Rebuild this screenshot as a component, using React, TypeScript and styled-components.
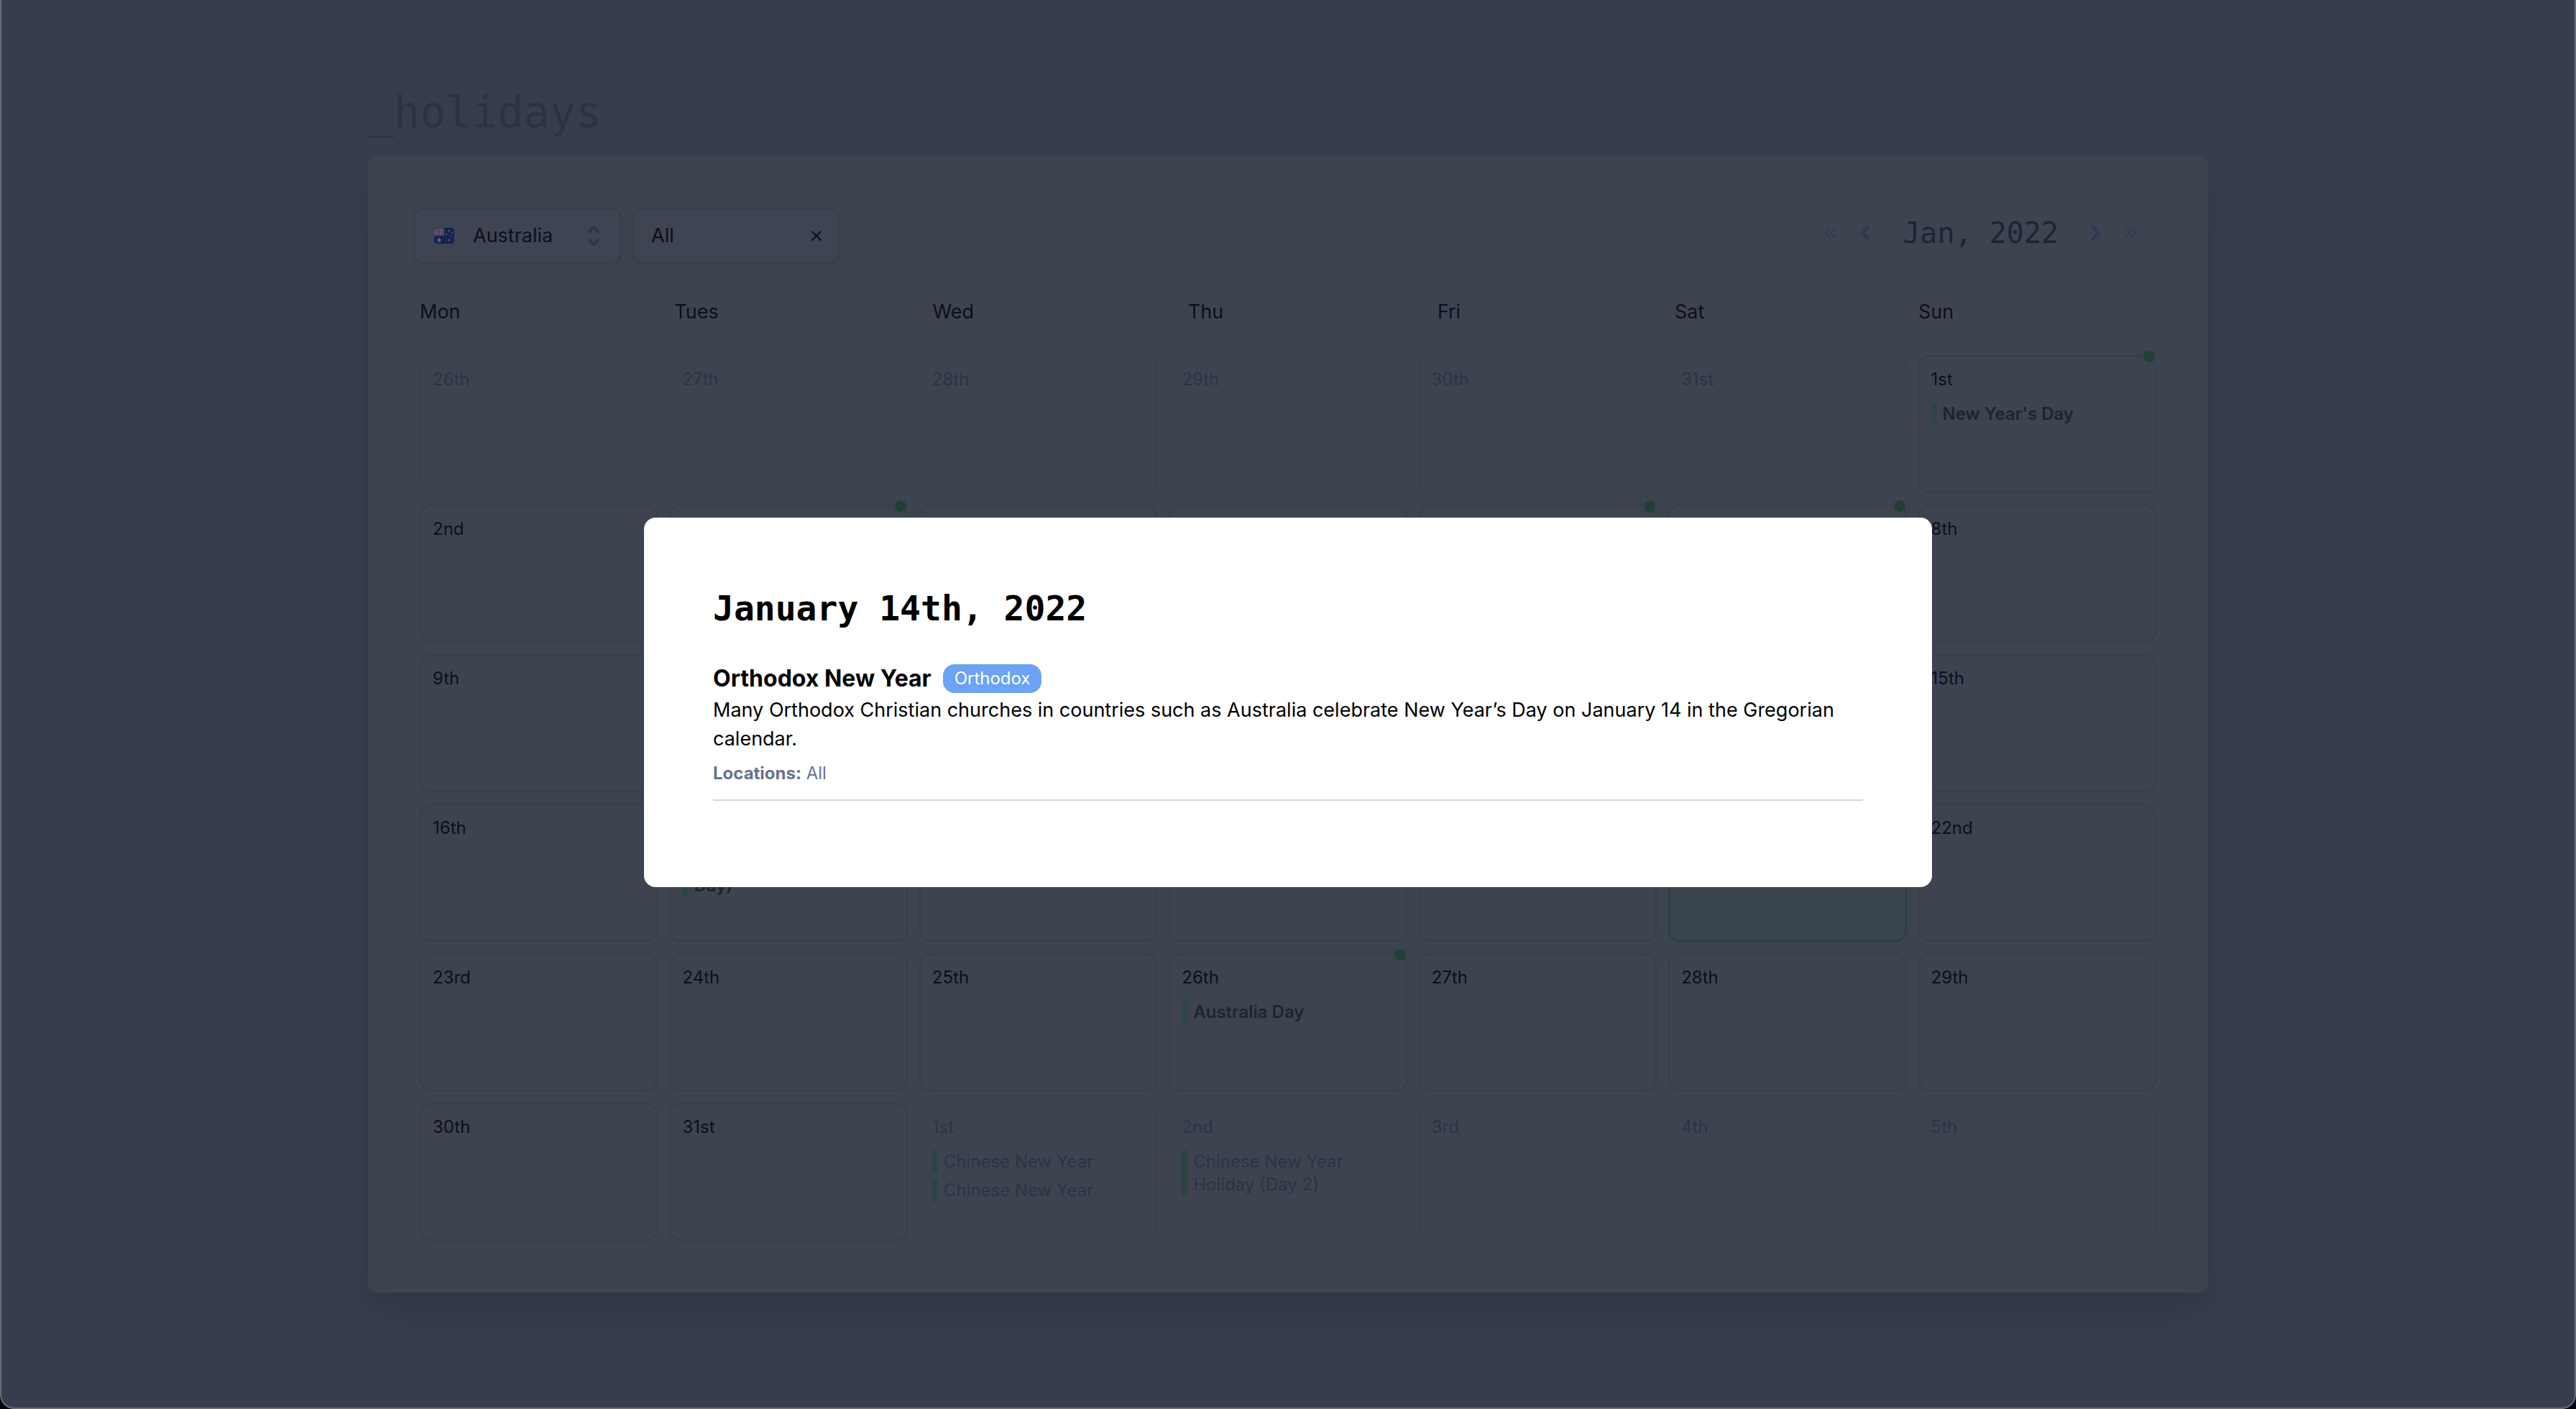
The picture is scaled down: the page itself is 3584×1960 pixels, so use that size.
import React from "react";
import styled, { createGlobalStyle, css } from "styled-components";

const sans = `Inter, "Liberation Sans", sans-serif`;
const mono = `"DejaVu Sans Mono", "Liberation Mono", monospace`;

const color = {
  page: "#383d4d",
  frame: "#676c77",
  card: "#3e4350",
  field: "#3f4452",
  line: "#383d4b",
  lineFaded: "#3b404e",
  text: "#0b0f1e",
  textFaded: "#2d3246",
  title: "#2d3144",
  month: "#1f2338",
  nav: "#2c3853",
  navFaint: "#303a52",
  green: "#213f37",
  greenBar: "#2b4744",
  greenBarFaded: "#2b4441",
  greenText: "#172829",
};

const GlobalStyle = createGlobalStyle`
  *, *::before, *::after { box-sizing: border-box; }
  body { margin: 0; background: #04050b; font-family: ${sans}; }
  h1, h2, h3, p, ul { margin: 0; padding: 0; }
  button, select { margin: 0; padding: 0; border: 0; background: none; color: inherit; font: inherit; }
`;

const Page = styled.div`
  min-height: 100vh;
  padding: 124px 0 158px;
  background: ${color.page};
  border: 2px solid ${color.frame};
  border-top: 0;
  border-radius: 0 0 20px 20px;
`;

const Container = styled.main`
  width: 100%;
  max-width: 2560px;
  margin: 0 auto;
`;

const Title = styled.h1`
  margin-bottom: 30px;
  font: 400 60px/64px ${mono};
  color: ${color.title};
`;

const Card = styled.section`
  padding: 72px 64px;
  background: ${color.card};
  border-radius: 12px;
  box-shadow: 0 40px 50px -10px rgba(26, 30, 46, 0.16), 0 20px 20px -10px rgba(26, 30, 46, 0.08);
`;

const Toolbar = styled.header`
  display: flex;
  align-items: flex-start;
  justify-content: space-between;
`;

const Fields = styled.div`
  display: flex;
  gap: 16px;
`;

const Field = styled.div<{ $withFlag?: boolean }>`
  display: flex;
  align-items: center;
  gap: 26px;
  width: 288px;
  padding: 16px 16px 16px ${(p) => (p.$withFlag ? 26 : 24)}px;
  background: ${color.field};
  border: 2px solid ${color.line};
  border-radius: 12px;
  box-shadow: 0 2px 4px rgba(20, 24, 38, 0.06);
  color: ${color.text};
`;

const Select = styled.select`
  flex: 1;
  min-width: 0;
  height: 40px;
  appearance: none;
  font-size: 27px;
  line-height: 40px;
`;

const IconButton = styled.button`
  display: grid;
  place-items: center;
  color: inherit;
`;

const MonthNav = styled.nav`
  display: flex;
  align-items: center;
  gap: 16px;
  height: 68px;
  padding-right: 32px;
  color: ${color.nav};
`;

const Month = styled.h2`
  padding: 0 16px;
  font: 400 40px/56px ${mono};
  color: ${color.month};
`;

const Calendar = styled.div`
  display: flex;
  flex-direction: column;
  gap: 40px;
  padding: 48px 8px 0;
`;

const Weekdays = styled.div`
  display: flex;
  margin-right: -16px;
  font-size: 27px;
  line-height: 40px;
  color: ${color.text};
`;

const Weekday = styled.span`
  flex: 1 1 auto;
`;

const Days = styled.div`
  display: grid;
  grid-template-columns: repeat(7, minmax(0, 1fr));
  gap: 16px;
`;

const Day = styled.article<{ $faded?: boolean; $today?: boolean }>`
  position: relative;
  display: flex;
  flex-direction: column;
  gap: 16px;
  min-height: 192px;
  padding: 16px;
  border: 2px solid ${(p) => (p.$faded ? color.lineFaded : color.line)};
  border-radius: 16px;
  font-size: 24px;
  line-height: 32px;
  color: ${(p) => (p.$faded ? color.textFaded : color.text)};
  ${(p) =>
    p.$today &&
    css`
      background: #3b454d;
      border-color: #21433e;
    `}
`;

const Dot = styled.i`
  position: absolute;
  top: -8px;
  right: 0;
  width: 16px;
  height: 16px;
  border-radius: 50%;
  background: ${color.green};
`;

const Events = styled.ul`
  display: flex;
  flex-direction: column;
  gap: 8px;
  list-style: none;
`;

const Event = styled.li<{ $faded?: boolean }>`
  padding-left: 8px;
  border-left: 8px solid ${(p) => (p.$faded ? color.greenBarFaded : color.greenBar)};
  color: ${(p) => (p.$faded ? "inherit" : color.greenText)};
  font-weight: ${(p) => (p.$faded ? 400 : 600)};
`;

const Backdrop = styled.div`
  position: fixed;
  inset: 0;
  display: grid;
  place-items: center;
  padding-bottom: 6px;
`;

const Dialog = styled.div`
  width: 50%;
  padding: 96px;
  background: #fff;
  border-radius: 16px;
  color: #000;
`;

const DialogTitle = styled.h2`
  margin-bottom: 44px;
  font: 700 48px/60px ${mono};
`;

const Holiday = styled.section`
  margin-bottom: 24px;
  padding-bottom: 20px;
  border-bottom: 2px solid #d4d6db;
`;

const HolidayHeader = styled.div`
  display: flex;
  align-items: center;
  gap: 16px;
  height: 48px;
`;

const HolidayName = styled.h3`
  font-size: 32px;
  line-height: 48px;
  font-weight: 650;
`;

const Tag = styled.span`
  padding: 4px 16px;
  background: #6ca3f2;
  border-radius: 16px;
  color: #fff;
  font-size: 24px;
  line-height: 32px;
`;

const Description = styled.p`
  margin-bottom: 12px;
  font-size: 27px;
  line-height: 40px;
`;

const Locations = styled.p`
  font-size: 24px;
  line-height: 32px;
  color: #67748c;
`;

const Flag = () => (
  <svg width="28" height="22" viewBox="0 0 28 22" aria-hidden="true">
    <rect width="28" height="22" rx="4" fill="#17234d" />
    <path d="M4 0h10v11H0V4a4 4 0 0 1 4-4z" fill="#2f3657" />
    <path d="M1.500 1.500l12 9M13 0.500L0.500 11" stroke="#55536a" strokeWidth="2" />
    <path d="M7 0v11M0 5.500h14" stroke="#626477" strokeWidth="4" />
    <path d="M7 0v11M0 5.500h14" stroke="#5a3a4e" strokeWidth="2" />
    <path d="M7 13l1 2.500 2.500.5-2 1.500.5 2.500-2-1-2 1 .5-2.500-2-1.500 2.500-.5z" fill="#566388" />
    <g fill="#4a587c">
      <circle cx="21" cy="4" r="1.200" />
      <circle cx="17" cy="9" r="1.200" />
      <circle cx="25" cy="7" r="1.200" />
      <circle cx="22.500" cy="11" r="0.800" />
      <circle cx="21" cy="17" r="1.400" />
    </g>
  </svg>
);

const Selector = () => (
  <svg width="40" height="40" viewBox="0 0 20 20" fill="none" stroke="#2f3547" strokeWidth="2" strokeLinecap="round" strokeLinejoin="round" aria-hidden="true">
    <path d="M7 7l3-3 3 3m0 6l-3 3-3-3" />
  </svg>
);

const Cross = () => (
  <svg width="28" height="28" viewBox="0 0 28 28" fill="none" stroke="currentColor" strokeWidth="2" aria-hidden="true">
    <path d="M7.500 7.500l13 13M20.500 7.500l-13 13" />
  </svg>
);

const Chevron = ({ right }: { right?: boolean }) => (
  <svg width="40" height="40" viewBox="0 0 20 20" fill="none" stroke="currentColor" strokeWidth="2" strokeLinecap="round" strokeLinejoin="round" aria-hidden="true">
    <path d={right ? "M8 6l4 4-4 4" : "M12 6l-4 4 4 4"} />
  </svg>
);

const DoubleChevron = ({ right }: { right?: boolean }) => (
  <svg width="24" height="24" viewBox="0 0 24 24" fill="none" stroke={color.navFaint} strokeWidth="2" strokeLinecap="round" strokeLinejoin="round" aria-hidden="true">
    <path d={right ? "M13 6l6 6-6 6M6 6l6 6-6 6" : "M11 18l-6-6 6-6m7 12l-6-6 6-6"} />
  </svg>
);

type DayData = { date: string; faded?: boolean; today?: boolean; dot?: boolean; events?: string[] };

const ordinal = (n: number) => {
  if (n > 3 && n < 21) return `${n}th`;
  return `${n}${["th", "st", "nd", "rd"][n % 10] ?? "th"}`;
};

const holidays: Record<number, string[]> = {
  1: ["New Year's Day"],
  17: ["Public Holiday (Extra Day)"],
  26: ["Australia Day"],
};
const marked = [1, 3, 6, 7, 26];

const days: DayData[] = [
  ...[26, 27, 28, 29, 30, 31].map((n) => ({ date: ordinal(n), faded: true })),
  ...Array.from({ length: 31 }, (_, i) => ({
    date: ordinal(i + 1),
    today: i + 1 === 21,
    dot: marked.includes(i + 1),
    events: holidays[i + 1],
  })),
  { date: "1st", faded: true, events: ["Chinese New Year", "Chinese New Year"] },
  { date: "2nd", faded: true, events: ["Chinese New Year Holiday (Day 2)"] },
  ...[3, 4, 5].map((n) => ({ date: ordinal(n), faded: true })),
];

const weekdays = ["Mon", "Tues", "Wed", "Thu", "Fri", "Sat", "Sun"];

export default function App() {
  return (
    <>
      <GlobalStyle />
      <Page>
        <Container>
          <Title>_holidays</Title>
          <Card>
            <Toolbar>
              <Fields>
                <Field $withFlag>
                  <Flag />
                  <Select aria-label="Country" defaultValue="Australia">
                    <option>Australia</option>
                  </Select>
                  <Selector />
                </Field>
                <Field>
                  <Select aria-label="Region" defaultValue="All">
                    <option>All</option>
                  </Select>
                  <IconButton type="button" aria-label="Clear region">
                    <Cross />
                  </IconButton>
                </Field>
              </Fields>
              <MonthNav aria-label="Month">
                <IconButton type="button" aria-label="Previous year"><DoubleChevron /></IconButton>
                <IconButton type="button" aria-label="Previous month"><Chevron /></IconButton>
                <Month>Jan, 2022</Month>
                <IconButton type="button" aria-label="Next month"><Chevron right /></IconButton>
                <IconButton type="button" aria-label="Next year"><DoubleChevron right /></IconButton>
              </MonthNav>
            </Toolbar>
            <Calendar>
              <Weekdays>
                {weekdays.map((name) => (
                  <Weekday key={name}>{name}</Weekday>
                ))}
              </Weekdays>
              <Days>
                {days.map((day, i) => (
                  <Day key={i} $faded={day.faded} $today={day.today}>
                    {day.dot && <Dot />}
                    <span>{day.date}</span>
                    {day.events && (
                      <Events>
                        {day.events.map((name, j) => (
                          <Event key={j} $faded={day.faded}>{name}</Event>
                        ))}
                      </Events>
                    )}
                  </Day>
                ))}
              </Days>
            </Calendar>
          </Card>
        </Container>
      </Page>
      <Backdrop>
        <Dialog role="dialog" aria-modal="true" aria-labelledby="dialog-title">
          <DialogTitle id="dialog-title">January 14th, 2022</DialogTitle>
          <Holiday>
            <HolidayHeader>
              <HolidayName>Orthodox New Year</HolidayName>
              <Tag>Orthodox</Tag>
            </HolidayHeader>
            <Description>
              Many Orthodox Christian churches in countries such as Australia celebrate New Year’s Day on January 14 in the Gregorian calendar.
            </Description>
            <Locations>
              <b>Locations:</b> All
            </Locations>
          </Holiday>
        </Dialog>
      </Backdrop>
    </>
  );
}
